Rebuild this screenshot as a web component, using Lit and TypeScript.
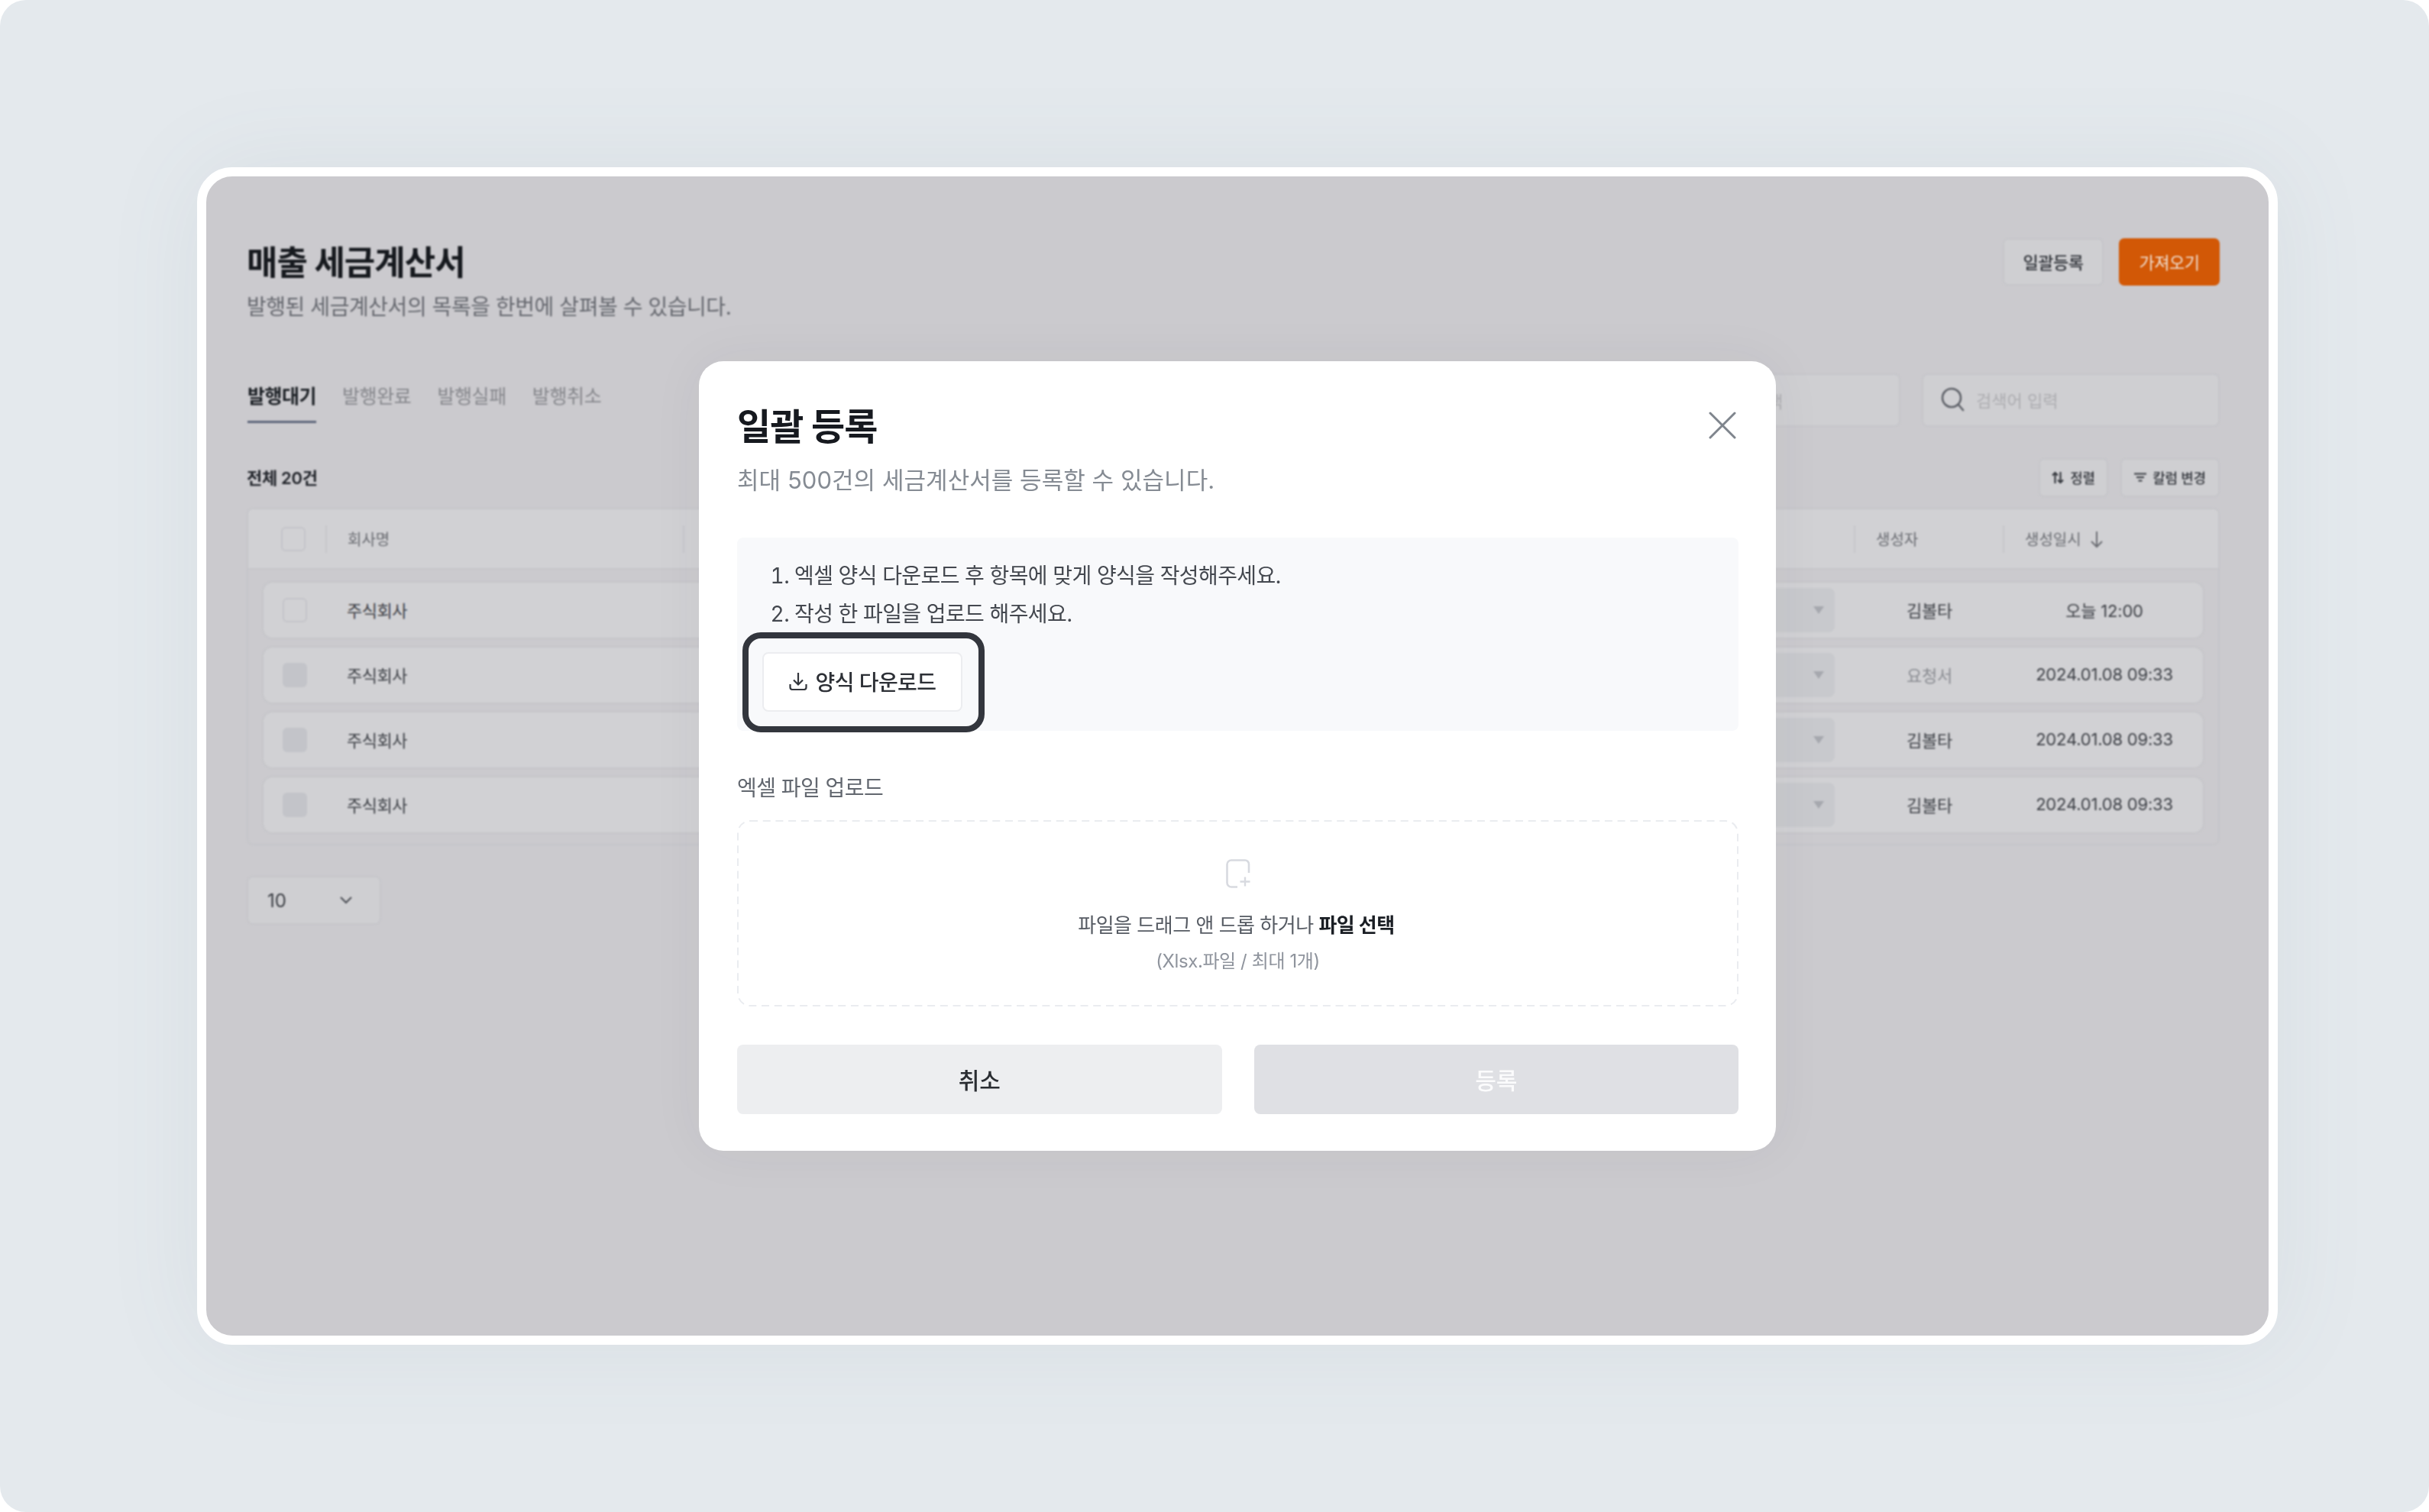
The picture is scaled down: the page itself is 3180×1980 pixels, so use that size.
import { LitElement, html, css } from "lit";
import { customElement } from "lit/decorators.js";

const rows = [
  { by: "김볼타", at: "오늘 12:00", first: true, muted: false },
  { by: "요청서", at: "2024.01.08 09:33", first: false, muted: true },
  { by: "김볼타", at: "2024.01.08 09:33", first: false, muted: false },
  { by: "김볼타", at: "2024.01.08 09:33", first: false, muted: false },
];

@customElement("app-root")
export class AppRoot extends LitElement {
  static styles = css`
    :host {
      display: block;
      width: 3180px;
      height: 1980px;
      background: #fff;
      font-family: Inter, "Noto Sans CJK KR", sans-serif;
      color: #1f2329;
    }
    * { box-sizing: border-box; }
    svg { display: block; flex: none; }
    .page {
      width: 3180px;
      height: 1980px;
      background: #e4e9ed;
      border-radius: 34px;
      padding: 219px 198px 219px 258px;
    }
    .frame {
      position: relative;
      height: 100%;
      border: 12px solid #fff;
      border-radius: 46px;
      background: #cbcace;
      box-shadow: 0 0 130px rgba(90, 110, 130, 0.08);
      overflow: hidden;
    }
    .panel {
      height: 100%;
      padding: 81px 64px 0 53px;
      filter: blur(1px);
    }
    .head { display: flex; justify-content: space-between; align-items: flex-start; height: 177px; }
    h1 { margin: 2px 0 0; font-size: 44px; line-height: 60px; font-weight: 700; letter-spacing: -1px; color: #16191e; }
    .sub { margin: 8px 0 0; font-size: 28px; line-height: 40px; letter-spacing: -0.45px; color: #66686f; }
    .head-btns { display: flex; gap: 20px; }
    .btn {
      display: flex; align-items: center; justify-content: center;
      border: 2px solid #c6c6ca; border-radius: 7px; background: #cfcfd2;
      color: #33363c; font-weight: 500;
    }
    .btn.big { width: 132px; height: 62px; padding-bottom: 2px; font-size: 22px; letter-spacing: -0.5px; }
    .btn.orange { background: #d25806; border-color: #d25806; color: #f0e2d6; font-weight: 400; }
    .btn.small { height: 51px; padding-bottom: 1px; font-size: 18px; letter-spacing: -0.3px; gap: 8px; color: #35383e; }
    .btn.sort { width: 91px; }
    .btn.cols { width: 130px; }
    .tools { display: flex; justify-content: space-between; align-items: flex-start; height: 70px; }
    .tabs { display: flex; gap: 34px; margin-left: 1px; }
    .tab { padding: 13px 0 15px; font-size: 25px; line-height: 34px; color: #86878c; letter-spacing: -0.4px; border-bottom: 3px solid transparent; }
    .tab.on { color: #1c2025; font-weight: 700; letter-spacing: -0.5px; border-bottom-color: #5d6679; }
    .fields { display: flex; gap: 28px; }
    .field {
      height: 70px; display: flex; align-items: center;
      background: #cfcfd2; border: 2px solid #c6c6ca; border-radius: 8px;
      font-size: 22px; color: #adadb1;
    }
    .field.pick { width: 287px; padding-left: 44px; }
    .field.search { width: 390px; padding-left: 22px; padding-bottom: 2px; gap: 15px; }
    .count { display: flex; justify-content: space-between; align-items: center; height: 51px; margin-top: 41px; }
    .count b { padding-bottom: 3px; font-size: 22px; font-weight: 600; letter-spacing: -0.3px; color: #22252b; }
    .count div { display: flex; gap: 16px; }
    .table { margin-top: 14px; border: 2px solid #c6c6ca; border-radius: 8px; }
    .thead {
      display: grid; grid-template-columns: 101px 468px 1fr 195px 282px;
      align-items: center; height: 79px;
      background: #d1d1d4; border-bottom: 2px solid #c6c6ca; border-radius: 6px 6px 0 0;
      font-size: 20px; color: #6a6c72;
    }
    .thead > div { display: flex; align-items: center; gap: 11px; height: 36px; padding-left: 27px; border-left: 2px solid #c6c6ca; }
    .thead > div:first-child { border-left: none; padding-left: 43px; }
    .box { width: 32px; height: 32px; border: 2px solid #c4c4c9; border-radius: 6px; background: #d1d1d4; }
    .box.fill { background: #c3c4c9; border-color: #c3c4c9; }
    .tbody { display: flex; flex-direction: column; gap: 9px; padding: 15px 18px 13px 18px; }
    .row {
      display: grid; grid-template-columns: 110px 1fr 248px 210px;
      align-items: center; height: 76px; padding-right: 24px; padding-left: 25px;
      background: #d1d1d4; border: 2px solid #c6c6ca; border-radius: 14px;
      font-size: 22px; color: #3e4147;
    }
    .cell-box { grid-column: 1; grid-row: 1; }
    .co { grid-column: 1 / 3; grid-row: 1; margin-left: 84px; padding-bottom: 3px; letter-spacing: -0.5px; white-space: nowrap; }
    .sel {
      grid-column: 2; grid-row: 1; justify-self: end;
      width: 300px; height: 58px; padding-right: 14px;
      display: flex; align-items: center; justify-content: flex-end;
      background: #c8c9cd; border-radius: 8px;
    }
    .who, .when { padding-bottom: 3px; text-align: center; letter-spacing: -0.3px; }
    .when { letter-spacing: -0.2px; }
    .who.muted { color: #8a8c92; }
    .size {
      display: flex; align-items: center; justify-content: space-between;
      width: 176px; height: 64px; margin-top: 40px; padding: 0 36px 0 25px;
      border: 2px solid #c6c6ca; border-radius: 8px; background: #cfcfd2;
      font-size: 24px; color: #3a3d43;
    }
    .modal {
      position: absolute; left: 645px; top: 242px;
      width: 1410px; height: 1034px;
      background: #fff; border-radius: 32px;
      box-shadow: 0 0 70px rgba(60, 60, 70, 0.05);
    }
    .m-body { padding: 53px 49px 0 50px; filter: blur(0.45px); }
    .m-head { display: flex; justify-content: space-between; align-items: flex-start; }
    h2 { margin: 0; font-size: 48px; line-height: 66px; font-weight: 700; letter-spacing: -0.9px; color: #16191f; }
    .close { margin: 13px 3px 0 0; padding: 0; border: 0; background: none; }
    .m-sub { margin: 14px 0 0; font-size: 31px; line-height: 46px; letter-spacing: 0.05px; color: #858b93; }
    .guide { margin-top: 52px; height: 253px; padding: 25px 33px; background: #f8f9fb; border-radius: 8px; font-size: 28px; color: #44484f; }
    ol { margin: 0 0 25px; padding-left: 42px; line-height: 50px; letter-spacing: -0.6px; }
    .dl {
      position: relative; display: flex; align-items: center; justify-content: center; gap: 11px;
      width: 262px; height: 78px; padding-bottom: 2px; background: #fff; border: 2px solid #ecedf0; border-radius: 8px;
      font-size: 28px; font-weight: 500; letter-spacing: -0.6px; color: #2d3036;
    }
    .mark { position: absolute; left: -28px; right: -31px; top: -28px; bottom: -29px; border: 8px solid #33363d; border-radius: 24px; pointer-events: none; }
    .lab { margin-top: 55px; font-size: 28px; line-height: 40px; letter-spacing: -0.55px; color: #62676f; }
    .drop {
      position: relative;
      margin-top: 22px; height: 244px; padding-top: 51px;
      display: flex; flex-direction: column; align-items: center;
      text-align: center;
    }
    .dash { position: absolute; left: 0; top: 0; }
    .drop p { margin: 0; }
    .drop .t1 { margin: 29px 4px 0 0; font-size: 26px; line-height: 40px; letter-spacing: -0.5px; color: #565b63; }
    .drop .t1 b { font-weight: 700; color: #1a1e24; }
    .drop .t2 { margin-top: 7px; font-size: 24px; line-height: 40px; letter-spacing: -0.4px; color: #8f949d; }
    .acts { display: flex; gap: 42px; margin-top: 50px; }
    .act { flex: 1; height: 91px; padding-bottom: 2px; display: flex; align-items: center; justify-content: center; border-radius: 8px; font-size: 30px; font-weight: 500; }
    .act.cancel { background: #edeef0; color: #2a2d32; }
    .act.go { background: #dfe0e4; color: #fbfbfc; }
  `;

  render() {
    return html`
      <div class="page">
        <div class="frame">
          <div class="panel">
            <header class="head">
              <div>
                <h1>매출 세금계산서</h1>
                <p class="sub">발행된 세금계산서의 목록을 한번에 살펴볼 수 있습니다.</p>
              </div>
              <div class="head-btns">
                <div class="btn big">일괄등록</div>
                <div class="btn big orange">가져오기</div>
              </div>
            </header>
            <div class="tools">
              <div class="tabs">
                <div class="tab on">발행대기</div>
                <div class="tab">발행완료</div>
                <div class="tab">발행실패</div>
                <div class="tab">발행취소</div>
              </div>
              <div class="fields">
                <div class="field pick">항목 선택</div>
                <div class="field search">
                  <svg width="32" height="32" viewBox="0 0 32 32" fill="none" stroke="#5f6269" stroke-width="2.6" stroke-linecap="round"><circle cx="15" cy="14" r="12"/><path d="M24 23l6 7"/></svg>
                  <span>검색어 입력</span>
                </div>
              </div>
            </div>
            <div class="count">
              <b>전체 20건</b>
              <div>
                <span class="btn small sort">
                  <svg width="16" height="17" viewBox="0 0 16 17" fill="none" stroke="#35383e" stroke-width="2.2"><path d="M4.500 16V2M1 5.500L4.500 2 8 5.500M11.500 1v14M8 11.500L11.500 15 15 11.500"/></svg>
                  정렬</span>
                <span class="btn small cols">
                  <svg width="16" height="12" viewBox="0 0 16 12" fill="none" stroke="#35383e" stroke-width="1.800"><path d="M0 1.500h16M3 6h10M5.500 10.500h5"/></svg>
                  칼럼 변경</span>
              </div>
            </div>
            <section class="table">
              <div class="thead">
                <div><span class="box"></span></div>
                <div>회사명</div>
                <div></div>
                <div>생성자</div>
                <div>생성일시
                  <svg width="18" height="24" viewBox="0 0 18 24" fill="none" stroke="#6a6c72" stroke-width="2"><path d="M9 2v20M2 15l7 7 7-7"/></svg>
                </div>
              </div>
              <div class="tbody">
                ${rows.map(
                  (r) => html`
                    <div class="row">
                      <span class="box cell-box ${r.first ? "" : "fill"}"></span>
                      <span class="co">주식회사</span>
                      <span class="sel">
                        <svg width="14" height="10" viewBox="0 0 14 10" fill="#a6a8ae"><path d="M0 0h14L7 10z"/></svg>
                      </span>
                      <span class="who ${r.muted ? "muted" : ""}">${r.by}</span>
                      <span class="when">${r.at}</span>
                    </div>
                  `
                )}
              </div>
            </section>
            <div class="size">
              <span>10</span>
              <svg width="16" height="10" viewBox="0 0 16 10" fill="none" stroke="#4a4d53" stroke-width="2"><path d="M1 1l7 7 7-7"/></svg>
            </div>
          </div>

          <div class="modal">
            <div class="m-body">
              <div class="m-head">
                <h2>일괄 등록</h2>
                <button class="close" aria-label="닫기">
                  <svg width="36" height="36" viewBox="0 0 36 36" fill="none" stroke="#7f858d" stroke-width="3" stroke-linecap="round"><path d="M2 2l32 32M34 2L2 34"/></svg>
                </button>
              </div>
              <p class="m-sub">최대 500건의 세금계산서를 등록할 수 있습니다.</p>
              <div class="guide">
                <ol>
                  <li>엑셀 양식 다운로드 후 항목에 맞게 양식을 작성해주세요.</li>
                  <li>작성 한 파일을 업로드 해주세요.</li>
                </ol>
                <div class="dl">
                  <svg width="24" height="24" viewBox="0 0 24 24" fill="none" stroke="#33363c" stroke-width="2.2"><path d="M12 1v15M6 10.500l6 6 6-6M1.500 16v4a3 3 0 0 0 3 3h15a3 3 0 0 0 3-3v-4"/></svg>
                  양식 다운로드
                  <span class="mark"></span>
                </div>
              </div>
              <div class="lab">엑셀 파일 업로드</div>
              <div class="drop">
                <svg class="dash" width="1311" height="244" viewBox="0 0 1311 244" fill="none"><rect x="1" y="1" width="1309" height="242" rx="16" stroke="#eaecf0" stroke-width="2" stroke-dasharray="10 6.700"/></svg>
                <svg width="34" height="38" viewBox="0 0 34 38" fill="none" stroke="#d8dae0" stroke-width="2.600"><path d="M16 36.500H8A5.500 5.500 0 0 1 2.500 31V7A5.500 5.500 0 0 1 8 1.500H26a5 5 0 0 1 5 5V18"/><path stroke-width="2.400" d="M26 23.500v12M19.500 29.500h13"/></svg>
                <p class="t1">파일을 드래그 앤 드롭 하거나 <b>파일 선택</b></p>
                <p class="t2">(Xlsx.파일 / 최대 1개)</p>
              </div>
              <div class="acts">
                <div class="act cancel">취소</div>
                <div class="act go">등록</div>
              </div>
            </div>
          </div>
        </div>
      </div>
    `;
  }
}
